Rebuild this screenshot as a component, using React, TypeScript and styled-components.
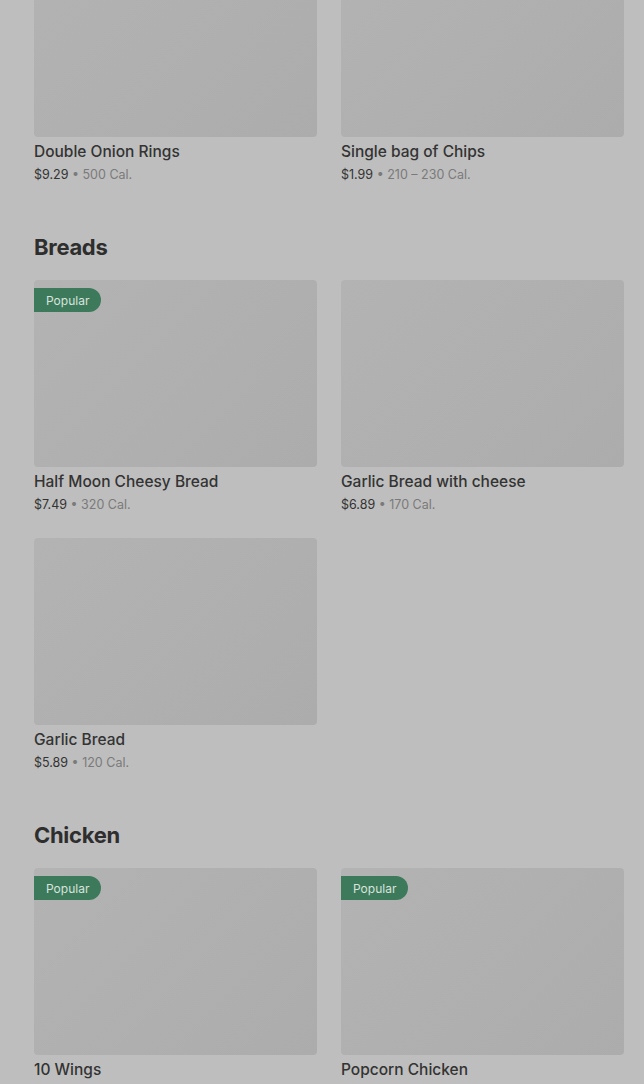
import React from "react";
import styled, { createGlobalStyle } from "styled-components";

const Global = createGlobalStyle`
  html, body { margin: 0; padding: 0; background: #bebebe; overflow: hidden; }
  body { font-family: Inter, "Noto Sans", "Liberation Sans", sans-serif; }
`;

const Page = styled.main`
  margin-top: -50px;
  padding: 0 20px 0 34px;
  display: flex;
  flex-direction: column;
  gap: 46px;
`;

const Section = styled.section`
  display: flex;
  flex-direction: column;
  gap: 17px;
`;

const Heading = styled.h2`
  margin: 0;
  font-size: 22px;
  line-height: 32px;
  font-weight: 700;
  color: #2e2e2e;
  letter-spacing: -0.3px;
`;

const Grid = styled.div`
  display: grid;
  grid-template-columns: 283px 283px;
  column-gap: 24px;
  row-gap: 23px;
`;

const Card = styled.article`
  display: flex;
  flex-direction: column;
`;

const Thumb = styled.div`
  position: relative;
  height: 187px;
  border-radius: 4px;
  background: linear-gradient(135deg, #b3b3b3 0%, #afafaf 60%, #acacac 100%);
`;

const Badge = styled.span`
  position: absolute;
  top: 8px;
  left: 0;
  height: 24px;
  padding: 0 12px;
  display: flex;
  align-items: center;
  background: #3d7a5b;
  color: #d9e3dd;
  font-size: 12px;
  border-radius: 0 12px 12px 0;
`;

const Name = styled.div`
  margin-top: 5px;
  font-size: 15.5px;
  line-height: 20px;
  font-weight: 500;
  color: #333;
`;

const Meta = styled.div`
  margin-top: 3px;
  font-size: 12.5px;
  line-height: 20px;
  color: #7a7a7a;
`;

const Price = styled.span`
  color: #333;
`;

type Item = { name: string; price: string; cal: string; popular?: boolean };

const sections: { title?: string; items: Item[] }[] = [
  {
    items: [
      { name: "Double Onion Rings", price: "$9.29", cal: "500 Cal." },
      { name: "Single bag of Chips", price: "$1.99", cal: "210 – 230 Cal." },
    ],
  },
  {
    title: "Breads",
    items: [
      { name: "Half Moon Cheesy Bread", price: "$7.49", cal: "320 Cal.", popular: true },
      { name: "Garlic Bread with cheese", price: "$6.89", cal: "170 Cal." },
      { name: "Garlic Bread", price: "$5.89", cal: "120 Cal." },
    ],
  },
  {
    title: "Chicken",
    items: [
      { name: "10 Wings", price: "$13.49", cal: "840 – 1010 Cal.", popular: true },
      { name: "Popcorn Chicken", price: "$8.99", cal: "610 Cal.", popular: true },
    ],
  },
];

export default function App() {
  return (
    <>
      <Global />
      <Page>
        {sections.map((s, i) => (
          <Section key={i}>
            {s.title && <Heading>{s.title}</Heading>}
            <Grid>
              {s.items.map((it) => (
                <Card key={it.name}>
                  <Thumb>{it.popular && <Badge>Popular</Badge>}</Thumb>
                  <Name>{it.name}</Name>
                  <Meta>
                    <Price>{it.price}</Price> • {it.cal}
                  </Meta>
                </Card>
              ))}
            </Grid>
          </Section>
        ))}
      </Page>
    </>
  );
}
